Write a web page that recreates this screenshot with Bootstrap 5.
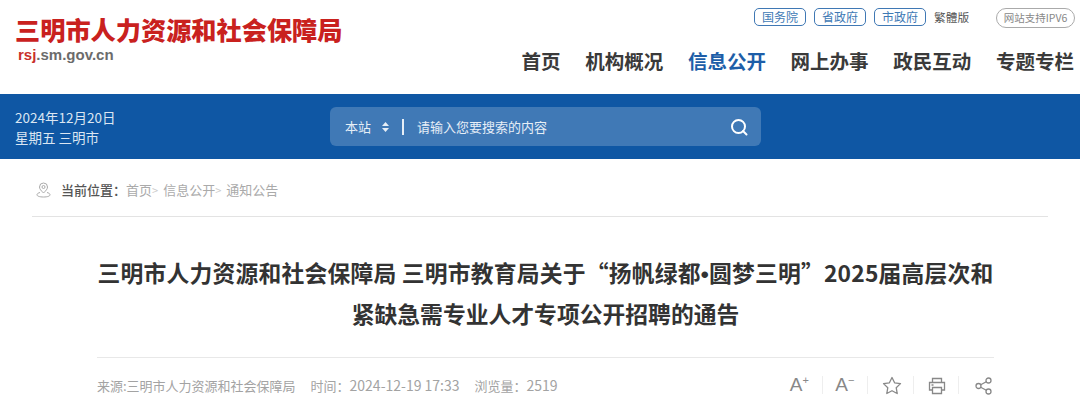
<!DOCTYPE html>
<html lang="zh-CN">
<head>
    <meta charset="UTF-8">
    <title>三明市人力资源和社会保障局</title>
    <link href="https://cdn.jsdelivr.net/npm/bootstrap@5.3.2/dist/css/bootstrap.min.css" rel="stylesheet">
    <style>
        body { font-family: "Noto Sans CJK SC", "Liberation Sans", sans-serif; overflow: hidden; height: 405px; }
        a { text-decoration: none; }
        .site-top { height: 94px; padding: 8px 5px 0 15px; }
        .logo-name { font-family: "Liberation Sans", "Noto Sans CJK SC", sans-serif; font-size: 25.2px; line-height: 28px; font-weight: 900; color: #c9211e; margin-top: 9px; white-space: nowrap; }
        .logo-url { font-family: "Liberation Sans", sans-serif; font-size: 15px; line-height: 18px; font-weight: 700; color: #6b6b6b; margin: 1px 0 0 3px; }
        .logo-url b { color: #c9302c; }
        .top-pill { width: 52px; height: 18px; line-height: 15px; font-size: 12px; color: #3f7ab5; border: 1px solid #3f78b4; border-radius: 5px; text-align: center; }
        .top-lang { font-size: 11.7px; color: #555; line-height: 17px; width: 35px; white-space: nowrap; }
        .top-ipv6 { width: 79px; height: 20px; line-height: 17px; font-size: 10.5px; color: #888; border: 1px solid #aaa; border-radius: 10px; text-align: center; margin-left: 19px; white-space: nowrap; }
        .top-links { gap: 8px; }
        .main-nav { gap: 24.7px; margin: 20px 1px 0 0; }
        .main-nav a { font-size: 19.5px; line-height: 26px; font-weight: 700; color: #3a3a3a; white-space: nowrap; }
        .main-nav a.is-on { color: #1d5ea8; }
        .blue-band { height: 65px; background: #0f57a4; color: #dbe6f2; padding-left: 15px; }
        .band-date { width: 315px; font-size: 13.5px; line-height: 20px; }
        .search-box { width: 431px; height: 39px; background: #4079b6; border-radius: 6px; padding: 0 13px 0 15px; color: #e6eef6; font-size: 13px; }
        .search-arrows { margin-left: 11px; }
        .search-sep { width: 2px; height: 16px; background: #e6eef6; margin: 0 13px 0 13px; }
        .crumbs { height: 58px; margin: 0 32px; border-bottom: 1px solid #e3e3e3; padding: 5px 0 0 4px; font-size: 13px; color: #aaa; }
        .crumbs strong { color: #555; font-weight: 500; margin: 0 0 0 10px; }
        .crumbs i { font-style: normal; color: #ccc; font-size: 11px; margin-right: 5px; }
        .article-wrap { margin: 0 86px 0 97px; }
        .article-title { font-size: 22.8px; line-height: 40px; font-weight: 700; color: #333; text-align: center; margin: 36px 0 23px; white-space: nowrap; }
        .title-lead { letter-spacing: .2px; }
        .title-dot { font-family: "Liberation Sans", sans-serif; }
        .meta-row { border-top: 1px solid #e8e8e8; height: 48px; padding-top: 7px; font-size: 13px; color: #a3a3a3; }
        .meta-info > span { margin-right: 12px; }
        .meta-num { font-size: 14px; }
        .meta-tools { color: #888; }
        .tool-cell { width: 45.5px; height: 18px; border-right: 1px solid #eee; font-family: "Liberation Sans", sans-serif; font-size: 19px; line-height: 18px; }
        .tool-shift { padding-left: 3px; }
        .tool-cell:last-child { border-right: 0; width: 35px; text-align: right; padding-right: 1px; }
        .tool-cell sup { font-size: 11px; top: -7px; }
    </style>
</head>
<body>
    <header class="site-top d-flex justify-content-between">
        <div>
            <div class="logo-name">三明市人力资源和社会保障局</div>
            <div class="logo-url"><b>rsj</b>.sm.gov.cn</div>
        </div>
        <div class="d-flex flex-column align-items-end">
            <div class="d-flex align-items-start top-links">
                <a class="top-pill" href="#">国务院</a>
                <a class="top-pill" href="#">省政府</a>
                <a class="top-pill" href="#">市政府</a>
                <span class="top-lang">繁體版</span>
                <span class="top-ipv6">网站支持IPV6</span>
            </div>
            <nav class="d-flex main-nav">
                <a href="#">首页</a>
                <a href="#">机构概况</a>
                <a href="#" class="is-on">信息公开</a>
                <a href="#">网上办事</a>
                <a href="#">政民互动</a>
                <a href="#">专题专栏</a>
            </nav>
        </div>
    </header>

    <div class="blue-band d-flex align-items-center">
        <div class="band-date">2024年12月20日<br>星期五 三明市</div>
        <div class="search-box d-flex align-items-center">
            <span>本站</span>
            <svg class="search-arrows" width="7" height="12" viewBox="0 0 7 12"><path d="M3.500 1 7 5H0zM3.500 11 0 7h7z" fill="#e6eef6"/></svg>
            <span class="search-sep"></span>
            <span>请输入您要搜索的内容</span>
            <svg class="ms-auto" width="18" height="18" viewBox="0 0 18 18" fill="none" stroke="#fff" stroke-width="2"><circle cx="8.500" cy="8.500" r="6.500"/><path d="m13 13 3.500 3.500" stroke-linecap="round"/></svg>
        </div>
    </div>

    <div class="crumbs d-flex align-items-center">
        <svg width="15" height="16" viewBox="0 0 15 16" fill="none" stroke="#aaa" stroke-width="1"><path d="M7.500 11C5 8.500 3.500 7 3.500 5a4 4 0 0 1 8 0c0 2-1.500 3.500-4 6z"/><circle cx="7.500" cy="5" r="1.500"/><path d="M4 10.500c-2 .5-3 1.300-3 2.300 0 1.300 2.500 2.200 6.500 2.200s6.500-.9 6.500-2.200c0-1-1-1.800-3-2.300"/></svg>
        <strong>当前位置：</strong>
        <span>首页</span><i>&gt;</i>
        <span>信息公开</span><i>&gt;</i>
        <span>通知公告</span>
    </div>

    <main class="article-wrap">
        <h1 class="article-title"><span class="title-lead">三明市人力资源和社会保障局 三明市教育局关于“扬帆绿都<span class="title-dot">•</span>圆梦三明”2025届高层次和</span><br>紧缺急需专业人才专项公开招聘的通告</h1>
        <div class="meta-row d-flex align-items-center justify-content-between">
            <div class="meta-info">
                <span>来源:三明市人力资源和社会保障局</span>
                <span>时间：<span class="meta-num">2024-12-19 17:33</span></span>
                <span>浏览量：<span class="meta-num">2519</span></span>
            </div>
            <div class="meta-tools d-flex align-items-center text-center">
                <div class="tool-cell">A<sup>+</sup></div>
                <div class="tool-cell">A<sup>−</sup></div>
                <div class="tool-cell tool-shift"><svg width="20" height="19" viewBox="0 0 20 19" fill="none" stroke="#888" stroke-width="1.300" stroke-linejoin="round"><path d="M10 1.500l2.600 5.300 5.900.8-4.300 4.100 1 5.800-5.200-2.800-5.200 2.800 1-5.800L1.500 7.600l5.900-.8z"/></svg></div>
                <div class="tool-cell tool-shift"><svg width="18" height="18" viewBox="0 0 18 18" fill="none" stroke="#888" stroke-width="1.300"><path d="M4.500 5.500V1.500h9v4M4.500 13H1.500V5.500h15V13h-3"/><path d="M4.500 10.500h9v6h-9zM3.500 8h2"/></svg></div>
                <div class="tool-cell"><svg width="18" height="18" viewBox="0 0 18 18" fill="none" stroke="#888" stroke-width="1.300"><circle cx="3.500" cy="9" r="2.500"/><circle cx="13.500" cy="3.500" r="2.500"/><circle cx="13.500" cy="14.500" r="2.500"/><path d="m5.700 7.800 5.600-3.100M5.700 10.200l5.600 3.100"/></svg></div>
            </div>
        </div>
    </main>

    <script src="https://cdn.jsdelivr.net/npm/bootstrap@5.3.2/dist/js/bootstrap.bundle.min.js"></script>
</body>
</html>
